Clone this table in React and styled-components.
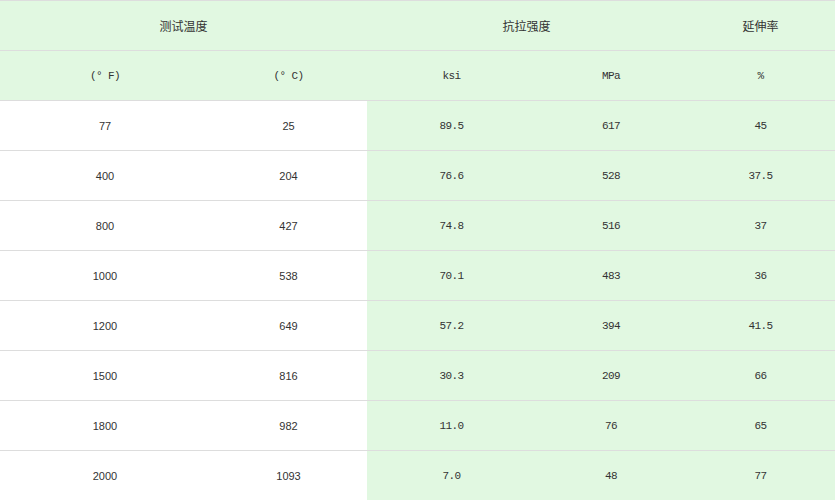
import React from 'react';
import styled, { createGlobalStyle } from 'styled-components';

const GlobalStyle = createGlobalStyle`
  html, body {
    margin: 0;
    padding: 0;
    background: #ffffff;
  }
`;

const Table = styled.table`
  width: 835px;
  border-collapse: collapse;
  table-layout: fixed;
  color: #333333;
`;

const HeadRow = styled.tr`
  background: #e1f8e1;
`;

const Cell = styled.td`
  height: 49px;
  padding: 0;
  border-top: 1px solid #dddddd;
  text-align: center;
  vertical-align: middle;
  background: ${(p) => (p.$green ? '#e1f8e1' : 'transparent')};
  font-family: ${(p) =>
    p.$sans
      ? '"Liberation Sans", Arial, sans-serif'
      : '"Liberation Mono", "Noto Sans CJK SC", monospace'};
  font-size: ${(p) => (p.$sans ? '11px' : '11px')};
  letter-spacing: ${(p) => (p.$sans ? '0' : '-0.6px')};
`;

const Title = styled.td`
  height: 49px;
  padding: 0;
  border-top: 1px solid #dddddd;
  text-align: center;
  vertical-align: middle;
  font-family: "Noto Sans CJK SC", sans-serif;
  font-size: 12px;
`;

const rows = [
  ['77', '25', '89.5', '617', '45'],
  ['400', '204', '76.6', '528', '37.5'],
  ['800', '427', '74.8', '516', '37'],
  ['1000', '538', '70.1', '483', '36'],
  ['1200', '649', '57.2', '394', '41.5'],
  ['1500', '816', '30.3', '209', '66'],
  ['1800', '982', '11.0', '76', '65'],
  ['2000', '1093', '7.0', '48', '77'],
];

export default function App() {
  return (
    <>
      <GlobalStyle />
      <Table>
        <colgroup>
          <col style={{ width: 210 }} />
          <col style={{ width: 157 }} />
          <col style={{ width: 169 }} />
          <col style={{ width: 150 }} />
          <col style={{ width: 149 }} />
        </colgroup>
        <tbody>
          <HeadRow>
            <Title colSpan={2}>测试温度</Title>
            <Title colSpan={2}>抗拉强度</Title>
            <Title>延伸率</Title>
          </HeadRow>
          <HeadRow>
            <Cell>(° F)</Cell>
            <Cell>(° C)</Cell>
            <Cell>ksi</Cell>
            <Cell>MPa</Cell>
            <Cell>%</Cell>
          </HeadRow>
          {rows.map((r) => (
            <tr key={r[0]}>
              <Cell $sans>{r[0]}</Cell>
              <Cell $sans>{r[1]}</Cell>
              <Cell $green>{r[2]}</Cell>
              <Cell $green>{r[3]}</Cell>
              <Cell $green>{r[4]}</Cell>
            </tr>
          ))}
        </tbody>
      </Table>
    </>
  );
}
